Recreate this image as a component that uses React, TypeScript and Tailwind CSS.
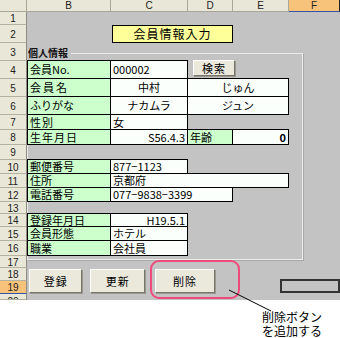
import React from "react";
import clsx from "clsx";

const font = { fontFamily: '"Noto Sans CJK JP", "Liberation Sans", sans-serif' };

type CellProps = {
  pos: string;
  kind?: "label" | "value";
  className?: string;
  children?: React.ReactNode;
};

function Cell({ pos, kind = "value", className, children }: CellProps) {
  return (
    <div
      className={clsx(
        "relative flex items-center whitespace-nowrap border-r border-b border-black px-[2px] text-[11px] leading-[11px] text-black",
        kind === "label" ? "bg-[#ccffcc]" : "bg-[#fbfffb]",
        pos,
        className
      )}
    >
      {children}
    </div>
  );
}

function XlButton({ className, children }: { className?: string; children: React.ReactNode }) {
  return (
    <div
      className={clsx(
        "flex items-center justify-center border border-t-white border-l-white border-r-[#77766c] border-b-[#77766c] bg-[#ebe9dc] text-[11px] leading-none tracking-[1px] text-black shadow-[1px_1px_0_#9a988c]",
        className
      )}
    >
      {children}
    </div>
  );
}

const cols = ["B", "C", "D", "E", "F"];
const rows = Array.from({ length: 20 }, (_, i) => i + 1);

export default function App() {
  return (
    <div className="relative h-[338px] w-[340px] overflow-hidden bg-white" style={font}>
      <div className="relative grid h-[300px] grid-cols-[27px_84px_77px_45px_56px_51px] grid-rows-[12px_13px_18px_18px_18px_18px_18px_15px_15px_15px_14px_14px_14px_12px_13px_14px_15px_12px_13px_13px_6px] overflow-hidden bg-[#c3c3c3]">
        {/* group box frame */}
        <div className="absolute left-[27px] top-[53px] h-[207px] w-[276px] border border-[#ececec] shadow-[1px_1px_0_#a9a9a9]" />
        <div className="absolute left-[27px] top-[46px] bg-[#c3c3c3] pl-px pr-[3px] text-[10px] font-bold leading-[14px] text-[#111]">
          個人情報
        </div>

        {/* column headers */}
        <div className="col-start-1 row-start-1 border-r border-b border-[#a9a799] bg-[#e9e7d7]" />
        {cols.map((c, i) => (
          <div
            key={c}
            className={clsx(
              "row-start-1 flex items-center justify-center border-r border-b text-[10px] leading-none text-[#222]",
              i === 0 && "col-start-2",
              i === 1 && "col-start-3",
              i === 2 && "col-start-4",
              i === 3 && "col-start-5",
              i === 4 && "col-start-6 border-b-[#3552a8] bg-[#f7c27a]",
              i !== 4 && "border-[#a9a799] bg-[#e9e7d7]"
            )}
            style={{ fontFamily: '"Liberation Sans", sans-serif' }}
          >
            {c}
          </div>
        ))}

        {/* row headers */}
        {rows.map((r) => (
          <div
            key={r}
            className={clsx(
              "col-start-1 flex justify-center border-r border-b border-r-[#8e8c80] text-[10px] leading-[10px] text-[#222]",
              r === 20 ? "items-start overflow-hidden pt-[3px]" : "items-center pt-[2px]",
              r === 19 ? "border-b-[#3552a8] bg-[#f7c27a]" : "border-b-[#b3b1a2] bg-[#e9e7d7]"
            )}
            style={{ gridRowStart: r + 1, fontFamily: '"Liberation Sans", sans-serif' }}
          >
            {r}
          </div>
        ))}

        {/* title */}
        <div className="col-start-3 col-span-2 row-start-3 ml-px flex items-center justify-center border border-black bg-[#ffff99] text-[12px] leading-none tracking-[1px] text-black">
          会員情報入力
        </div>

        {/* row 4 */}
        <Cell kind="label" pos="col-start-2 row-start-5 border-l border-t -mt-px">会員No.</Cell>
        <Cell pos="col-start-3 row-start-5 border-t -mt-px">000002</Cell>
        <div className="col-start-4 col-span-2 row-start-5 -mt-px flex items-start pl-[5px]">
          <XlButton className="h-[16px] w-[42px]">検索</XlButton>
        </div>

        {/* row 5 */}
        <Cell kind="label" pos="col-start-2 row-start-6 border-l" className="tracking-[2px]">会員名</Cell>
        <Cell pos="col-start-3 row-start-6 justify-center">中村</Cell>
        <Cell pos="col-start-4 col-span-2 row-start-6 border-t -mt-px justify-center">じゅん</Cell>

        {/* row 6 */}
        <Cell kind="label" pos="col-start-2 row-start-7 border-l">ふりがな</Cell>
        <Cell pos="col-start-3 row-start-7 justify-center">ナカムラ</Cell>
        <Cell pos="col-start-4 col-span-2 row-start-7 justify-center">ジュン</Cell>

        {/* row 7 */}
        <Cell kind="label" pos="col-start-2 row-start-8 border-l" className="tracking-[1px]">性別</Cell>
        <Cell pos="col-start-3 row-start-8">女</Cell>

        {/* row 8 */}
        <Cell kind="label" pos="col-start-2 row-start-9 border-l" className="tracking-[1px]">生年月日</Cell>
        <Cell pos="col-start-3 row-start-9 justify-end">S56.4.3</Cell>
        <Cell kind="label" pos="col-start-4 row-start-9 border-t -mt-px">年齢</Cell>
        <Cell pos="col-start-5 row-start-9 border-t -mt-px justify-end font-bold">0</Cell>

        {/* rows 10-12 */}
        <Cell kind="label" pos="col-start-2 row-start-11 border-l border-t -mt-px">郵便番号</Cell>
        <Cell pos="col-start-3 row-start-11 border-t -mt-px">877−1123</Cell>
        <Cell kind="label" pos="col-start-2 row-start-12 border-l">住所</Cell>
        <Cell pos="col-start-3 col-span-3 row-start-12 border-t -mt-px">京都府</Cell>
        <Cell kind="label" pos="col-start-2 row-start-13 border-l">電話番号</Cell>
        <Cell pos="col-start-3 col-span-2 row-start-13">077−9838−3399</Cell>

        {/* rows 14-16 */}
        <Cell kind="label" pos="col-start-2 row-start-15 border-l border-t -mt-px">登録年月日</Cell>
        <Cell pos="col-start-3 row-start-15 border-t -mt-px justify-end">H19.5.1</Cell>
        <Cell kind="label" pos="col-start-2 row-start-16 border-l">会員形態</Cell>
        <Cell pos="col-start-3 row-start-16">ホテル</Cell>
        <Cell kind="label" pos="col-start-2 row-start-17 border-l">職業</Cell>
        <Cell pos="col-start-3 row-start-17">会社員</Cell>

        {/* buttons rows 18-19 */}
        <div className="col-start-2 col-span-5 row-start-19 row-span-2 flex items-start pl-[2px] pt-px">
          <XlButton className="h-[24px] w-[56px]">登録</XlButton>
          <XlButton className="ml-[8px] h-[24px] w-[57px]">更新</XlButton>
          <XlButton className="ml-[10px] h-[24px] w-[63px]">削除</XlButton>
          <div className="ml-[65px] mt-[10px] h-[14px] w-[60px] shrink-0 border-2 border-[#333]" />
        </div>
      </div>

      {/* annotation */}
      <div className="absolute left-[150px] top-[260px] h-[39px] w-[90px] rounded-[9px] border-2 border-[#ef4a7c]" />
      <svg className="absolute left-0 top-0" width="340" height="338">
        <line x1="229" y1="290" x2="271" y2="311" stroke="#000" strokeWidth="1" />
      </svg>
      <div className="pl-[262px] pt-[10px] text-[12px] leading-[14px] text-black">
        <div>削除ボタン</div>
        <div>を追加する</div>
      </div>
    </div>
  );
}
